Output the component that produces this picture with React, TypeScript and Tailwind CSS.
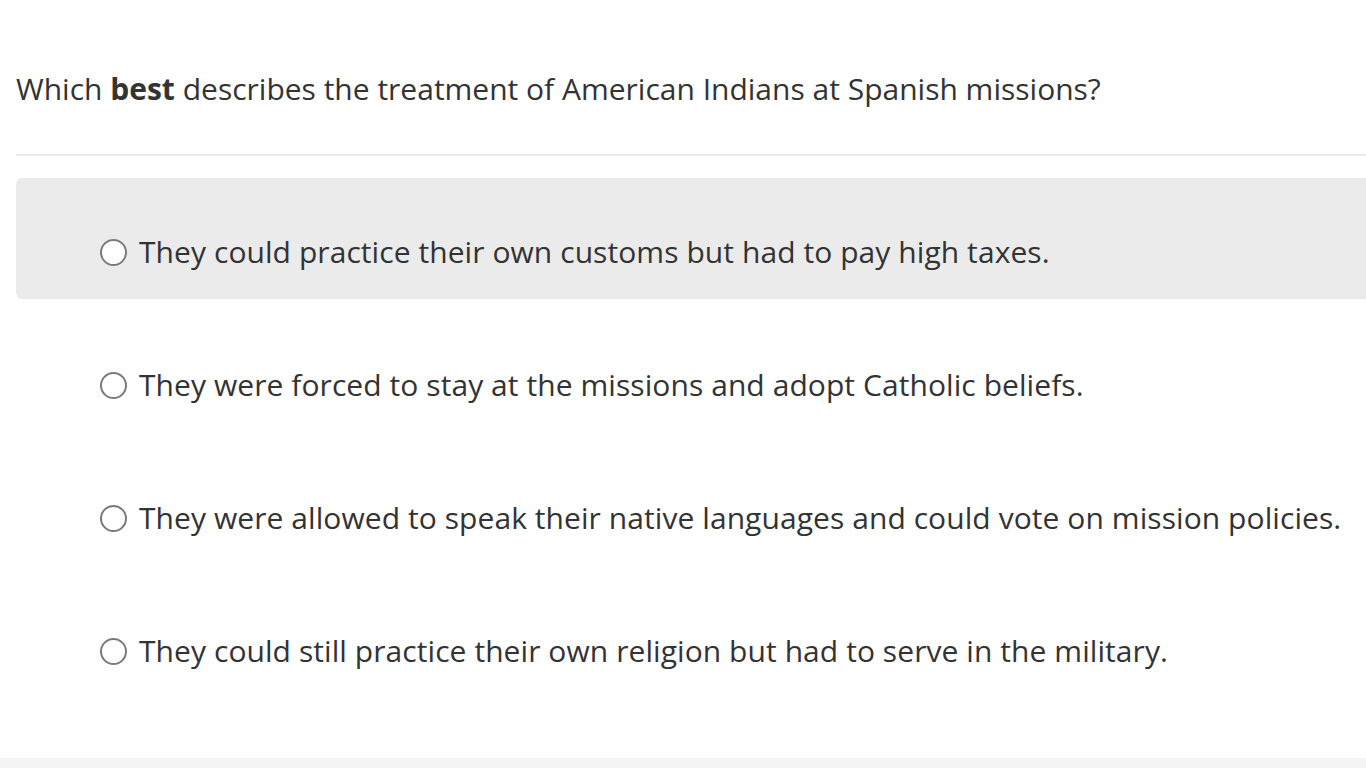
import React from "react";

const options = [
  "They could practice their own customs but had to pay high taxes.",
  "They were forced to stay at the missions and adopt Catholic beliefs.",
  "They were allowed to speak their native languages and could vote on mission policies.",
  "They could still practice their own religion but had to serve in the military.",
];

const App: React.FC = () => {
  return (
    <div
      className="relative h-screen w-full overflow-hidden bg-white text-[#333333]"
      style={{ fontFamily: '"Open Sans", "Noto Sans", sans-serif' }}
    >
      <div className="pl-4">
        {/* Question */}
        <p className="mt-[66px] text-[30px] leading-[45px] whitespace-nowrap">
          Which <strong className="font-bold">best</strong> describes the treatment of American Indians at Spanish missions?
        </p>
        <div className="mt-[43px] h-[2px] w-full bg-[#ebebeb]" />

        {/* Answers */}
        <div className="mt-[22px] flex flex-col gap-3">
          {options.map((text, i) => (
            <label
              key={i}
              className={
                "flex h-[121px] cursor-pointer items-center rounded-l-md pl-[84px] pt-[27px] " +
                (i === 0 ? "bg-[#ebebeb]" : "bg-white")
              }
            >
              <span className="h-[27px] w-[27px] shrink-0 rounded-full border-2 border-[#7a7a7a] bg-white" />
              <span className="ml-[12px] text-[30px] leading-[44px] tracking-[0.07px] whitespace-nowrap">{text}</span>
            </label>
          ))}
        </div>
      </div>

      {/* bottom strip */}
      <div className="absolute bottom-0 left-0 h-[10px] w-full bg-[#f3f3f3]" />
    </div>
  );
};

export default App;
